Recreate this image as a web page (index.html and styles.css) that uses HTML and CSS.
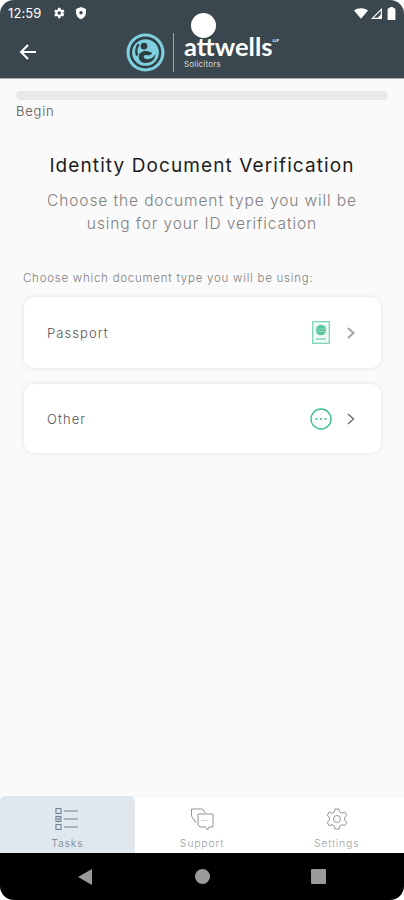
FILE: index.html
```html
<!DOCTYPE html>
<html lang="en">
<head>
  <meta charset="UTF-8" />
  <meta name="viewport" content="width=device-width, initial-scale=1.0"/>
  <title>Identity Document Verification</title>
  <link rel="stylesheet" href="styles.css">
</head>
<body>
  <div class="phone">
    <div class="camera"></div>

    <header class="top">
      <div class="status">
        <span class="time">12:59</span>
        <svg class="status-icon" viewBox="0 0 24 24"><path fill="#fff" d="M19.4 13a7.500 7.500 0 0 0 0-2l2.100-1.600-2-3.500-2.500 1a7.500 7.500 0 0 0-1.700-1L14.400 3.200h-4L10 5.900a7.500 7.500 0 0 0-1.700 1l-2.500-1-2 3.500L5.900 11a7.500 7.500 0 0 0 0 2l-2.100 1.600 2 3.500 2.500-1a7.500 7.500 0 0 0 1.700 1l.4 2.700h4l.4-2.700a7.500 7.500 0 0 0 1.700-1l2.500 1 2-3.500zM12.400 15a3 3 0 1 1 0-6 3 3 0 0 1 0 6z"/></svg>
        <svg class="status-icon" viewBox="0 0 24 24"><path fill="#fff" fill-rule="evenodd" d="M12 1.500 3.500 5v6c0 5.300 3.600 10 8.500 11.500 4.900-1.500 8.500-6.200 8.500-11.500V5zM12 8.500a3 3 0 1 1 0 6 3 3 0 0 1 0-6z"/></svg>
        <span class="status-right">
          <svg class="wifi" viewBox="0 0 16 12"><path fill="#fff" d="M0 2.500C4.500-.8 11.500-.8 16 2.500L8 12z"/></svg>
          <svg class="signal" viewBox="0 0 12 12"><path fill="none" stroke="#fff" stroke-width="1.200" d="M1.500 11.300 11.300 1.500v9.800z"/><path fill="#fff" d="M6 11.900 11.900 6v5.900z"/></svg>
          <svg class="battery" viewBox="0 0 10 15"><path fill="#fff" d="M3 0h4v1.500h1.500a1 1 0 0 1 1 1V14a1 1 0 0 1-1 1h-7a1 1 0 0 1-1-1V2.500a1 1 0 0 1 1-1H3z"/></svg>
        </span>
      </div>
      <div class="appbar">
        <svg class="back" viewBox="0 0 18 18"><path fill="none" stroke="#fff" stroke-width="2" d="M17 9H2.500M9 2 2 9l7 7"/></svg>
        <div class="logo">
          <svg class="logo-mark" viewBox="0 0 40 40">
            <circle cx="20" cy="20" r="19.500" fill="#7fd0de"/>
            <circle cx="20" cy="20" r="15" fill="none" stroke="#2f3d44" stroke-width="2.600"/>
            <circle cx="18.500" cy="13.500" r="3.400" fill="#2f3d44"/>
            <path fill="none" stroke="#2f3d44" stroke-width="2.600" d="M13 11.500c-2.500 3-3 8-1.500 11.500"/>
            <path fill="#2f3d44" d="M13 24.500c0-4 4-6.500 8-6 3 .3 5 2.500 5.500 1 .5 2-1.500 3.800-4.500 3.200-2.500-.5-4 .3-3.800 2 .3 2 3.500 2.800 6.300 1.800 3-1 5-3 5.500-5.500.8 4-2 8-6.500 9.300-5 1.400-10.500-1-10.500-5.800z"/>
          </svg>
          <span class="logo-rule"></span>
          <div class="logo-text">
            <div class="logo-name">attwells<sup>LLP</sup></div>
            <div class="logo-sub">Solicitors</div>
          </div>
        </div>
      </div>
    </header>

    <main class="content">
      <div class="progress"></div>
      <div class="step">Begin</div>
      <h1>Identity Document Verification</h1>
      <p class="intro">Choose the document type you will be using for your ID verification</p>
      <p class="hint">Choose which document type you will be using:</p>

      <div class="card card-tall">
        <span>Passport</span>
        <svg class="card-icon" viewBox="0 0 18 23">
          <rect x="0.700" y="0.700" width="16.600" height="21.600" fill="#effaf5" stroke="#74d2b0" stroke-width="1.200"/>
          <circle cx="9" cy="9" r="5.200" fill="#58c49c"/>
          <path d="M4 8h10M4 10.500h10" stroke="#a8e3cd" stroke-width="0.700"/>
          <path d="M4 18h10" stroke="#74d2b0" stroke-width="1.300"/>
        </svg>
        <svg class="chevron" viewBox="0 0 8 12"><path fill="none" stroke="#a4a4a4" stroke-width="2" d="m1 1 5.500 5L1 11"/></svg>
      </div>

      <div class="card">
        <span>Other</span>
        <svg class="card-icon other" viewBox="0 0 22 22">
          <circle cx="11" cy="11" r="10" fill="none" stroke="#3cc08f" stroke-width="1.400"/>
          <circle cx="6.500" cy="11" r="1.100" fill="#3cc08f"/>
          <circle cx="11" cy="11" r="1.100" fill="#3cc08f"/>
          <circle cx="15.500" cy="11" r="1.100" fill="#3cc08f"/>
        </svg>
        <svg class="chevron" viewBox="0 0 8 12"><path fill="none" stroke="#6d6d6d" stroke-width="1.400" d="m1 1 5.500 5L1 11"/></svg>
      </div>
    </main>

    <nav class="tabs">
      <div class="tab active">
        <svg viewBox="0 0 24 24"><g fill="none" stroke="#6d8599" stroke-width="1.100"><rect x="1" y="1.500" width="5" height="5"/><rect x="1" y="9.500" width="5" height="5"/><rect x="1" y="17.500" width="5" height="5"/><path d="M9 4h14M9 12h14M9 20h14"/><path d="m2 11 1.500 2L5.500 10"/></g></svg>
        <span>Tasks</span>
      </div>
      <div class="tab">
        <svg viewBox="0 0 24 24"><g fill="none" stroke="#8f979c" stroke-width="1"><path d="M6 16 1.500 9V2h11l3 4"/><path d="M8 7h15v13h-4l-1.500 3-2-3H10l-2-2z" fill="#fff"/></g><path d="M12 13.500h7" stroke="#b5bbbf" stroke-dasharray="1.500 1"/></svg>
        <span>Support</span>
      </div>
      <div class="tab">
        <svg viewBox="0 0 24 24"><g fill="none" stroke="#8f979c" stroke-width="1"><path d="M10 2h4l.6 3 2.400 1.200 2.800-1.200 2 3.500-2.300 2 .1 2.700 2.200 2-2 3.500-2.800-1-2.400 1.300L14 22h-4l-.6-3-2.400-1.300-2.800 1-2-3.500 2.200-2 .1-2.700-2.300-2 2-3.500L7 6.200 9.400 5z"/><circle cx="12" cy="12" r="3.500"/></g></svg>
        <span>Settings</span>
      </div>
    </nav>

    <div class="sysnav">
      <span class="sys-back"></span>
      <span class="sys-home"></span>
      <span class="sys-recent"></span>
    </div>
  </div>
</body>
</html>
```
FILE: styles.css
```css
html, body {
  margin: 0;
  padding: 0;
  background: #fff;
}

body {
  font-family: 'Inter', 'Open Sans', sans-serif;
  color: #333;
}

.phone {
  position: relative;
  width: 404px;
  height: 900px;
  display: flex;
  flex-direction: column;
  background: #fafafa;
  border-radius: 14px;
  overflow: hidden;
}

.camera {
  position: absolute;
  left: 191px;
  top: 13px;
  width: 25px;
  height: 25px;
  border-radius: 50%;
  background: #fff;
}

/* top bars */
.top {
  background: #3b474e;
  height: 78px;
  border-bottom: 1px solid #a9b3b7;
}

.status {
  display: flex;
  align-items: center;
  height: 26px;
  padding: 0 8px;
  color: #fff;
}

.time {
  font-size: 13px;
  margin-right: 11px;
  letter-spacing: 0.1px;
}

.status-icon {
  width: 14px;
  height: 14px;
  margin-right: 8px;
}

.status-right {
  display: flex;
  align-items: center;
  gap: 3px;
  margin-left: auto;
}

.wifi { width: 14px; height: 11px; }
.signal { width: 11px; height: 11px; }
.battery { width: 9px; height: 13px; margin-left: 2px; }

.appbar {
  position: relative;
  display: flex;
  align-items: center;
  justify-content: center;
  height: 52px;
}

.back {
  position: absolute;
  left: 19px;
  top: 17px;
  width: 18px;
  height: 18px;
}

.logo {
  display: flex;
  align-items: center;
  margin-left: 6px;
}

.logo-mark {
  width: 39px;
  height: 39px;
}

.logo-rule {
  width: 1px;
  height: 39px;
  margin: 0 10px 0 8px;
  background: #9aa5aa;
}

.logo-text {
  color: #fff;
  width: 100px;
}

.logo-name {
  font-family: 'Lato', sans-serif;
  font-size: 25.500px;
  font-weight: 700;
  line-height: 23px;
  letter-spacing: 0;
}

.logo-name sup {
  font-size: 4px;
  vertical-align: 14px;
  line-height: 0;
}

.logo-sub {
  margin-top: 1px;
  font-size: 8px;
  line-height: 11px;
  letter-spacing: 0.2px;
  color: #d5dadc;
}

/* main content */
.content {
  flex: 1;
  padding: 12px 16px 0;
}

.progress {
  height: 9px;
  border-radius: 5px;
  background: #e9e9e9;
}

.step {
  margin-top: 2px;
  font-size: 13px;
  line-height: 18px;
  font-weight: 300;
  letter-spacing: 0.8px;
  color: #555;
}

h1 {
  margin: 32px -6px 0;
  font-size: 19px;
  line-height: 28px;
  font-weight: 400;
  letter-spacing: 1.1px;
  text-align: center;
  color: #1c1c1c;
}

.intro {
  margin: 9px 0 0;
  padding: 0 12px;
  font-size: 15.500px;
  line-height: 23px;
  font-weight: 300;
  letter-spacing: 0.9px;
  text-align: center;
  color: #808080;
}

.hint {
  margin: 34px 0 10px 7px;
  font-size: 11.500px;
  line-height: 18px;
  font-weight: 300;
  letter-spacing: 0.75px;
  color: #808080;
}

.card {
  display: flex;
  align-items: center;
  height: 69px;
  margin: 0 7px 16px 8px;
  padding: 0 26px 0 23px;
  background: #fff;
  border-radius: 10px;
  box-shadow: 0 0 5px rgba(0, 0, 0, 0.1);
  font-size: 13px;
  font-weight: 300;
  letter-spacing: 1.1px;
  color: #555;
}

.card-tall {
  height: 71px;
}

.card-icon {
  width: 18px;
  height: 23px;
  margin-left: auto;
}

.card-icon.other {
  width: 22px;
  height: 22px;
}

.chevron {
  width: 8px;
  height: 12px;
  margin-left: 17px;
}

.card-icon.other + .chevron {
  margin-left: 15px;
}

/* bottom tabs */
.tabs {
  display: flex;
  height: 55px;
  background: #fff;
}

.tab {
  flex: 1;
  display: flex;
  flex-direction: column;
  align-items: center;
  padding-top: 9px;
  box-sizing: border-box;
  font-size: 10.500px;
  line-height: 14px;
  font-weight: 300;
  letter-spacing: 0.8px;
  color: #9aa1a6;
}

.tab svg {
  width: 24px;
  height: 24px;
  margin-bottom: 6px;
}

.tab.active {
  margin-top: -2px;
  padding-top: 11px;
  background: #e0e7ed;
  border-radius: 5px 5px 0 0;
  color: #6d8599;
}

.sysnav {
  display: flex;
  align-items: center;
  justify-content: center;
  gap: 102px;
  height: 47px;
  background: #000;
}

.sys-back {
  width: 0;
  height: 0;
  border-top: 8px solid transparent;
  border-bottom: 8px solid transparent;
  border-right: 14px solid #9a9a9a;
}

.sys-home {
  width: 15px;
  height: 15px;
  margin: 0 -1px 0 1px;
  border-radius: 50%;
  background: #9a9a9a;
}

.sys-recent {
  width: 15px;
  height: 15px;
  border-radius: 1px;
  background: #9a9a9a;
}
```
